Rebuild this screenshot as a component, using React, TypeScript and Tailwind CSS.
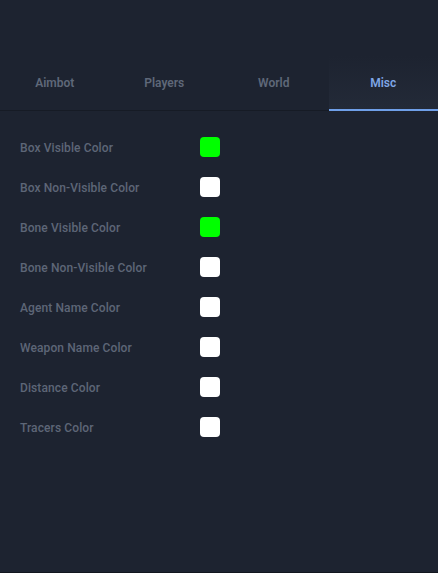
import React from "react";

const tabs = ["Aimbot", "Players", "World", "Misc"];
const rows: { label: string; color: string }[] = [
  { label: "Box Visible Color", color: "#00ff00" },
  { label: "Box Non-Visible Color", color: "#ffffff" },
  { label: "Bone Visible Color", color: "#00ff00" },
  { label: "Bone Non-Visible Color", color: "#ffffff" },
  { label: "Agent Name Color", color: "#ffffff" },
  { label: "Weapon Name Color", color: "#ffffff" },
  { label: "Distance Color", color: "#ffffff" },
  { label: "Tracers Color", color: "#ffffff" },
];

export default function App() {
  return (
    <div
      className="w-[438px] h-[573px] bg-[#1d2330] flex flex-col border-b border-[#12161e]"
      style={{ fontFamily: "Roboto, 'Noto Sans', sans-serif" }}
    >
      <div className="h-[56px]" />
      <div className="flex border-b border-[#161b25]">
        {tabs.map((t) => {
          const active = t === "Misc";
          return (
            <div
              key={t}
              className={
                active
                  ? "flex-1 h-[55px] flex items-center justify-center pt-px text-[12px] font-semibold text-[#7fa6e6] bg-gradient-to-b from-[#1d2330] to-[#232a38] border-b-2 border-[#6f9fe8] -mb-px"
                  : "flex-1 h-[54px] flex items-center justify-center text-[12px] font-semibold text-[#5f6879]"
              }
            >
              {t}
            </div>
          );
        })}
      </div>
      <div className="flex flex-col pt-[16px]">
        {rows.map((r) => (
          <div key={r.label} className="flex items-center h-[40px] pl-[20px]">
            <div className="w-[180px] pt-[2px] text-[12px] font-medium tracking-[0.1px] text-[#5d6677]">{r.label}</div>
            <div className="w-[20px] h-[20px] rounded-[4px]" style={{ backgroundColor: r.color }} />
          </div>
        ))}
      </div>
    </div>
  );
}
